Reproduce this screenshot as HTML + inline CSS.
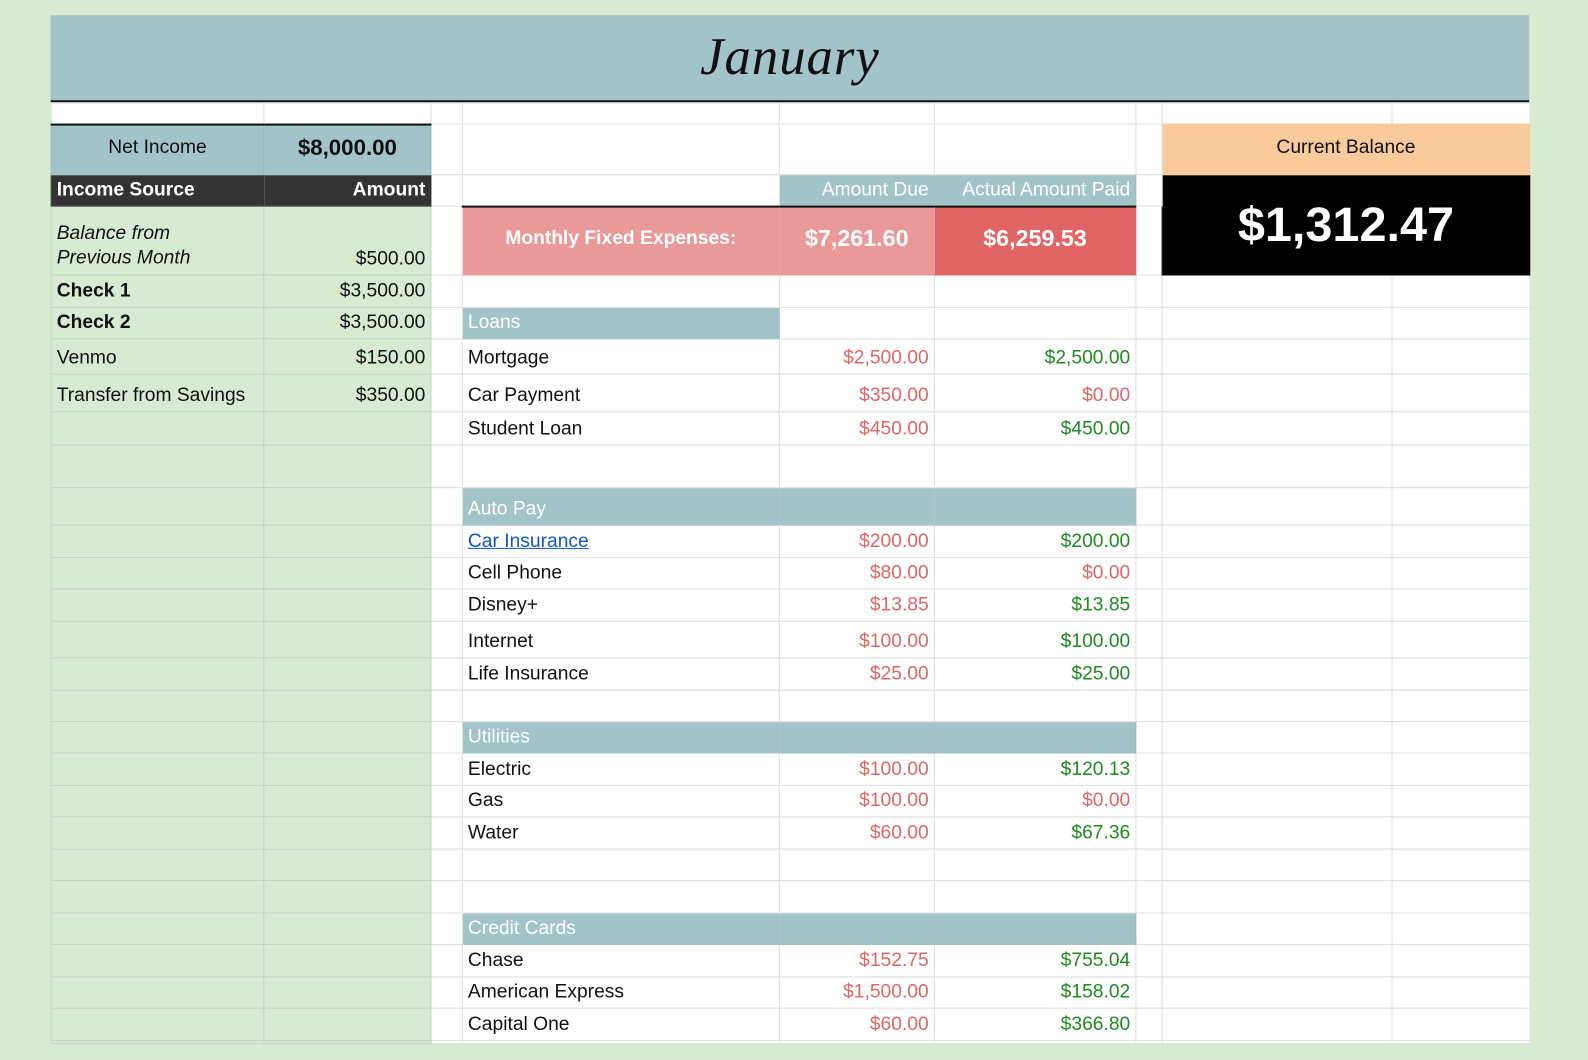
<!DOCTYPE html>
<html><head><meta charset="utf-8"><style>
html,body{margin:0;padding:0;background:#d9ead3;width:1588px;height:1060px;overflow:hidden}
#w{position:absolute;left:0;top:0;width:1568px;height:1047px;transform:scale(1.01276);transform-origin:0 0;font-family:"Liberation Sans",Arial,sans-serif}
#hdr{position:absolute;left:50px;top:15px;width:1460px;height:84px;background:#a2c4c9;border-bottom:2px solid #111}
#hdr span{position:absolute;left:0;right:0;top:12px;text-align:center;font-family:"Liberation Serif",serif;font-style:italic;font-size:52px;color:#111;letter-spacing:1px}
table{position:absolute;left:50px;top:101px;border-collapse:collapse;table-layout:fixed;width:1460px}
td{border:1px solid #e2e2e2;padding:0 5px;font-size:19px;color:#111;white-space:nowrap;overflow:hidden;vertical-align:bottom;padding-bottom:4px;box-sizing:border-box;background:#fff}
td.g{background:#d9ead3;border-color:#c3d4bd}
td.r{text-align:right}
.red{color:#e06666}.grn{color:#1f8a1f}
td.sec{background:#a2c4c9;color:#fff;border-color:#a2c4c9}
td.sec2{background:#a2c4c9;color:#fff;border-color:#9ab9be}
</style></head><body><div id="w">
<div id="hdr"><span>January</span></div>
<table>
<colgroup><col style="width:210px"><col style="width:165px"><col style="width:31px"><col style="width:313px"><col style="width:153px"><col style="width:199px"><col style="width:26px"><col style="width:227px"><col style="width:136px"></colgroup>
<tr style="height:21px"><td></td><td></td><td></td><td></td><td></td><td></td><td></td><td></td><td></td></tr>
<tr style="height:50px"><td style="background:#a2c4c9;border-color:#94b6bb;border-top:2px solid #111;text-align:center;font-size:19px;vertical-align:middle">Net Income</td><td style="background:#a2c4c9;border-color:#94b6bb;border-top:2px solid #111;text-align:center;font-size:22px;font-weight:bold;vertical-align:middle">$8,000.00</td><td></td><td></td><td></td><td></td><td></td><td colspan="2" style="background:#f9cb9c;border-top:2px solid #111;border-color:#f9cb9c;text-align:center;vertical-align:middle;font-size:19px">Current Balance</td></tr>
<tr style="height:31px"><td style="background:#333;color:#fff;border-color:#333;font-size:19px;font-weight:bold">Income Source</td><td class="r" style="background:#333;color:#fff;border-color:#333;font-weight:bold">Amount</td><td></td><td style="border-bottom:2px solid #111"></td><td class="sec2 r" style="border-bottom:2px solid #111">Amount Due</td><td class="sec2 r" style="border-bottom:2px solid #111">Actual Amount Paid</td><td></td><td colspan="2" rowspan="2" style="background:#000;color:#fff;border-color:#000;text-align:center;vertical-align:middle;font-size:48px;font-weight:bold;padding:0">$1,312.47</td></tr>
<tr style="height:68px"><td class="g" style="font-style:italic;line-height:24px">Balance from<br>Previous Month</td><td class="g r">$500.00</td><td></td><td style="background:#ea9999;border-color:#ea9999;color:#fff;font-weight:bold;text-align:center;vertical-align:middle;font-size:19px">Monthly Fixed Expenses:</td><td style="background:#ea9999;border-color:#e58f8f;color:#fff;font-weight:bold;text-align:center;vertical-align:middle;font-size:23px">$7,261.60</td><td style="background:#e06666;border-color:#e06666;color:#fff;font-weight:bold;text-align:center;vertical-align:middle;font-size:23px">$6,259.53</td><td></td></tr>
<tr style="height:32px"><td class="g" style="font-weight:bold">Check 1</td><td class="g r">$3,500.00</td><td></td><td></td><td></td><td></td><td></td><td></td><td></td></tr>
<tr style="height:31px"><td class="g" style="font-weight:bold">Check 2</td><td class="g r">$3,500.00</td><td></td><td class="sec">Loans</td><td></td><td></td><td></td><td></td><td></td></tr>
<tr style="height:35px"><td class="g">Venmo</td><td class="g r">$150.00</td><td></td><td>Mortgage</td><td class="r red">$2,500.00</td><td class="r grn">$2,500.00</td><td></td><td></td><td></td></tr>
<tr style="height:37px"><td class="g">Transfer from Savings</td><td class="g r">$350.00</td><td></td><td>Car Payment</td><td class="r red">$350.00</td><td class="r red">$0.00</td><td></td><td></td><td></td></tr>
<tr style="height:33px"><td class="g"></td><td class="g"></td><td></td><td>Student Loan</td><td class="r red">$450.00</td><td class="r grn">$450.00</td><td></td><td></td><td></td></tr>
<tr style="height:42px"><td class="g"></td><td class="g"></td><td></td><td></td><td></td><td></td><td></td><td></td><td></td></tr>
<tr style="height:37px"><td class="g"></td><td class="g"></td><td></td><td class="sec">Auto Pay</td><td class="sec"></td><td class="sec"></td><td></td><td></td><td></td></tr>
<tr style="height:32px"><td class="g"></td><td class="g"></td><td></td><td><span style="color:#1155cc;text-decoration:underline">Car Insurance</span></td><td class="r red">$200.00</td><td class="r grn">$200.00</td><td></td><td></td><td></td></tr>
<tr style="height:31px"><td class="g"></td><td class="g"></td><td></td><td>Cell Phone</td><td class="r red">$80.00</td><td class="r red">$0.00</td><td></td><td></td><td></td></tr>
<tr style="height:32px"><td class="g"></td><td class="g"></td><td></td><td>Disney+</td><td class="r red">$13.85</td><td class="r grn">$13.85</td><td></td><td></td><td></td></tr>
<tr style="height:36px"><td class="g"></td><td class="g"></td><td></td><td>Internet</td><td class="r red">$100.00</td><td class="r grn">$100.00</td><td></td><td></td><td></td></tr>
<tr style="height:32px"><td class="g"></td><td class="g"></td><td></td><td>Life Insurance</td><td class="r red">$25.00</td><td class="r grn">$25.00</td><td></td><td></td><td></td></tr>
<tr style="height:31px"><td class="g"></td><td class="g"></td><td></td><td></td><td></td><td></td><td></td><td></td><td></td></tr>
<tr style="height:31px"><td class="g"></td><td class="g"></td><td></td><td class="sec">Utilities</td><td class="sec2"></td><td class="sec2"></td><td></td><td></td><td></td></tr>
<tr style="height:32px"><td class="g"></td><td class="g"></td><td></td><td>Electric</td><td class="r red">$100.00</td><td class="r grn">$120.13</td><td></td><td></td><td></td></tr>
<tr style="height:31px"><td class="g"></td><td class="g"></td><td></td><td>Gas</td><td class="r red">$100.00</td><td class="r red">$0.00</td><td></td><td></td><td></td></tr>
<tr style="height:32px"><td class="g"></td><td class="g"></td><td></td><td>Water</td><td class="r red">$60.00</td><td class="r grn">$67.36</td><td></td><td></td><td></td></tr>
<tr style="height:31px"><td class="g"></td><td class="g"></td><td></td><td></td><td></td><td></td><td></td><td></td><td></td></tr>
<tr style="height:32px"><td class="g"></td><td class="g"></td><td></td><td></td><td></td><td></td><td></td><td></td><td></td></tr>
<tr style="height:31px"><td class="g"></td><td class="g"></td><td></td><td class="sec">Credit Cards</td><td class="sec2"></td><td class="sec2"></td><td></td><td></td><td></td></tr>
<tr style="height:32px"><td class="g"></td><td class="g"></td><td></td><td>Chase</td><td class="r red">$152.75</td><td class="r grn">$755.04</td><td></td><td></td><td></td></tr>
<tr style="height:31px"><td class="g"></td><td class="g"></td><td></td><td>American Express</td><td class="r red">$1,500.00</td><td class="r grn">$158.02</td><td></td><td></td><td></td></tr>
<tr style="height:32px"><td class="g"></td><td class="g"></td><td></td><td>Capital One</td><td class="r red">$60.00</td><td class="r grn">$366.80</td><td></td><td></td><td></td></tr>
<tr style="height:3px"><td class="g" style="padding:0"></td><td class="g" style="padding:0"></td><td style="padding:0"></td><td style="padding:0"></td><td style="padding:0"></td><td style="padding:0"></td><td style="padding:0"></td><td style="padding:0"></td><td style="padding:0"></td></tr>
</table>
</div></body></html>
